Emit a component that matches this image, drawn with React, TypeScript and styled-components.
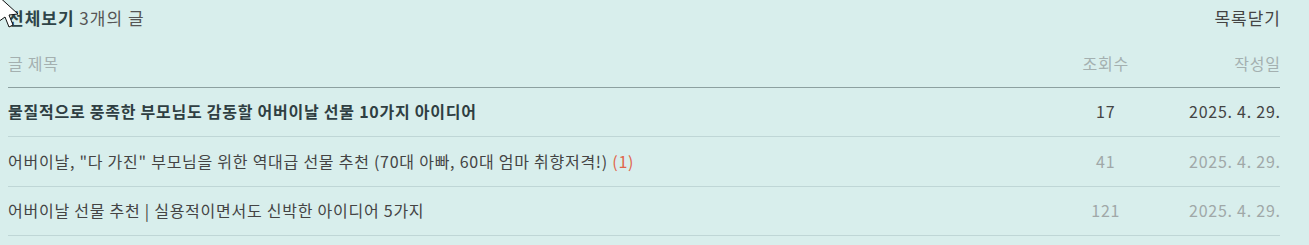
import React from "react";
import styled, { createGlobalStyle } from "styled-components";

type Post = {
  title: string;
  comments?: number;
  views: number;
  date: string;
  current?: boolean;
};

const posts: Post[] = [
  {
    title: "물질적으로 풍족한 부모님도 감동할 어버이날 선물 10가지 아이디어",
    views: 17,
    date: "2025. 4. 29.",
    current: true,
  },
  {
    title:
      '어버이날, "다 가진" 부모님을 위한 역대급 선물 추천 (70대 아빠, 60대 엄마 취향저격!)',
    comments: 1,
    views: 41,
    date: "2025. 4. 29.",
  },
  {
    title: "어버이날 선물 추천 | 실용적이면서도 신박한 아이디어 5가지",
    views: 121,
    date: "2025. 4. 29.",
  },
];

const GlobalStyle = createGlobalStyle`
  html, body {
    margin: 0;
    padding: 0;
    background: #d8eeec;
  }
  body {
    font-family: "Noto Sans CJK KR", "Noto Sans", sans-serif;
  }
  * {
    box-sizing: border-box;
  }
`;

const App = () => {
  return (
    <>
      <GlobalStyle />
      <Page>
        <Cursor viewBox="0 0 24 32" aria-hidden>
          <path
            d="M-4 -6 L18 14 L9 15 L13 25 L9 27 L5 17 L-2 22 Z"
            fill="#fff"
            stroke="#111"
            strokeWidth="1"
          />
        </Cursor>
        <Head>
          <Heading>
            <strong>전체보기</strong> 3개의 글
          </Heading>
          <CloseLink>목록닫기</CloseLink>
        </Head>
        <Table>
          <HeadRow>
            <TitleCell>글 제목</TitleCell>
            <ViewsCell>조회수</ViewsCell>
            <DateCell>작성일</DateCell>
          </HeadRow>
          {posts.map((p) => (
            <Row key={p.title} $current={!!p.current}>
              <TitleCell>
                {p.title}
                {p.comments ? <Comments> ({p.comments})</Comments> : null}
              </TitleCell>
              <ViewsCell>{p.views}</ViewsCell>
              <DateCell>{p.date}</DateCell>
            </Row>
          ))}
        </Table>
      </Page>
    </>
  );
};

const Page = styled.div`
  position: relative;
  padding: 0 29px 0 8px;
  width: 1309px;
  height: 245px;
  overflow: hidden;
  color: #333;
`;

const Cursor = styled.svg`
  position: absolute;
  left: 0;
  top: 0;
  width: 24px;
  height: 32px;
  overflow: visible;
`;

const Head = styled.div`
  display: flex;
  align-items: center;
  justify-content: space-between;
  height: 35px;
  letter-spacing: 1px;
`;

const Heading = styled.div`
  font-size: 17px;
  color: #555;
  strong {
    color: #2f4448;
    font-weight: 700;
  }
`;

const CloseLink = styled.a`
  font-size: 17px;
  color: #444;
  cursor: pointer;
  margin-right: -1px;
`;

const Table = styled.div`
  display: flex;
  flex-direction: column;
  font-size: 16px;
  letter-spacing: 0.75px;
`;

const HeadRow = styled.div`
  display: flex;
  align-items: center;
  height: 53px;
  padding-top: 4px;
  border-bottom: 1px solid #8ca0a0;
  color: #a4b0b0;
`;

const Row = styled.div<{ $current: boolean }>`
  display: flex;
  align-items: center;
  height: 49.4px;
  padding-bottom: 2px;
  border-bottom: 1px solid #bfd6d6;
  color: ${(p) => (p.$current ? "#444" : "#a0a8a8")};

  & > div:first-child {
    color: ${(p) => (p.$current ? "#2f3e42" : "#444")};
    font-weight: ${(p) => (p.$current ? 700 : 400)};
  }
`;

const TitleCell = styled.div`
  flex: 1;
  white-space: nowrap;
`;

const ViewsCell = styled.div`
  width: 80px;
  text-align: center;
`;

const DateCell = styled.div`
  width: 135px;
  text-align: right;
  margin-right: -0.75px;
`;

const Comments = styled.span`
  color: #e0654b;
`;

export default App;
